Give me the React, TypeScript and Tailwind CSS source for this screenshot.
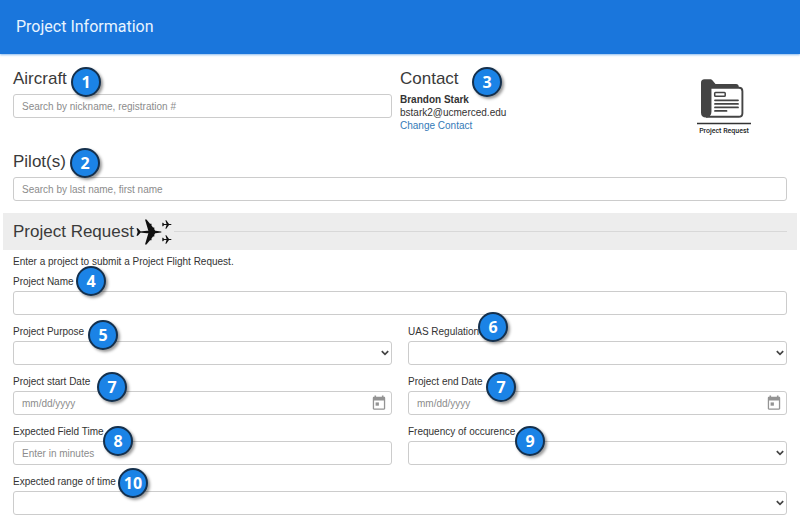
import type { ReactNode } from "react";

const field =
  "block h-6 w-full rounded-[3px] border border-[#ccc] bg-white px-2 text-[10px] leading-4 text-[#333] placeholder:text-[#8c8c8c] placeholder:opacity-100 outline-none focus:border-[#1a76dc]";

function Badge({ n, className }: { n: number; className: string }) {
  return (
    <span
      className={`absolute z-10 flex size-[30px] items-center justify-center rounded-full border-2 border-[#14304d] bg-[#1b83e6] font-['Open_Sans',sans-serif] text-base leading-none font-bold text-white shadow-[2px_2px_3px_rgba(0,0,0,0.4)] ${className}`}
    >
      {n}
    </span>
  );
}

function Heading({ children, badge }: { children: ReactNode; badge?: ReactNode }) {
  return (
    <div className="flex">
      <h2 className="relative text-[17px] leading-6 text-[#3a3a3a]">
        {children}
        {badge}
      </h2>
    </div>
  );
}

function Field({
  id,
  label,
  badge,
  children,
}: {
  id: string;
  label: string;
  badge: ReactNode;
  children: ReactNode;
}) {
  return (
    <div className="pt-[3px]">
      <div className="flex">
        <label htmlFor={id} className="relative block h-[17px] leading-4">
          {label}
          {badge}
        </label>
      </div>
      {children}
    </div>
  );
}

function Select({ id }: { id: string }) {
  return (
    <div className="relative">
      <select id={id} className={`${field} appearance-none`} defaultValue="">
        <option value="" />
      </select>
      <svg
        viewBox="0 0 8 6"
        className="pointer-events-none absolute top-[9px] right-[3px] h-1.5 w-2"
        fill="none"
        stroke="#444"
        strokeWidth="1.7"
        aria-hidden="true"
      >
        <path d="M0.8 1.2 L4 4.400 L7.2 1.2" />
      </svg>
    </div>
  );
}

function DateInput({ id }: { id: string }) {
  return (
    <div className="relative">
      <input id={id} type="text" placeholder="mm/dd/yyyy" className={field} />
      <svg viewBox="0 0 14 16" className="pointer-events-none absolute top-1 right-1.5 h-4 w-3.5" fill="#949494" aria-hidden="true">
        <path
          fillRule="evenodd"
          d="M2.5 0.5h1.6v1.3h5.8V0.5h1.6v1.3H12c.7 0 1.2.5 1.2 1.2v10.6c0 .7-.5 1.2-1.2 1.2H2c-.7 0-1.2-.5-1.2-1.2V3c0-.7.5-1.2 1.2-1.2h.5zM2.1 5.6v7.9h9.8V5.6z"
        />
        <path d="M3.6 7.4h3.3v3.3H3.6z" />
      </svg>
    </div>
  );
}

function Planes() {
  return (
    <svg viewBox="0 0 36 28" className="h-7 w-9" fill="#111" aria-hidden="true">
      <path d="M0.500 10.300h1.300l2.700 3v1.400l-2.700 3h-1.300l1.200-3.700z" />
      <path d="M3.500 13.400 L11 12.700 H19.500 L25 13.400 Q26.300 14 25 14.600 L19.500 15.300 H11 L3.500 14.600 Z" />
      <path d="M9 1.500 h1.500 L14 5.800 h1.500 v1.800 l1.500 1.900 h1.300 v1.800 L19.500 13.500 v1 L18.300 16.700 v1.800 H17 l-1.500 1.900 v1.800 H14 L10.500 26.500 H9 L12.700 14z" />
      {[6.500, 21.500].map((y) => (
        <g key={y} transform={`translate(26 ${y})`}>
          <path d="M0.300 -1.800h.8l1 1.300H9.300v1H2.100l-1 1.300H.3z" />
          <path d="M3.400 -4.200h.9L7 -.4v.8L4.300 4.200h-.9L4.700 0z" />
        </g>
      ))}
    </svg>
  );
}

function FolderIcon() {
  return (
    <svg viewBox="0 0 54 46" className="h-[46px] w-[54px]" aria-hidden="true">
      <path
        fill="#444"
        d="M4 4 C4 1.500 5.2 0.300 7.500 0.300 h5.500 c1.500 0 2.200.600 3 1.600 l2.500 3 H39 c1.800 0 2.800 1 2.800 3 V34 H8 c-2.500 0-4-1.500-4-4z"
      />
      <path fill="#fff" stroke="#444" strokeWidth="1.900" d="M13.500 8.800 h28.500 q3.400 0 3.400 3.400 v22 q0 3.600-3.800 3.600 H9 q4.500-1 4.500-5z" />
      <path fill="#444" d="M4 12 h9.500 v21.300 q0 5.300-4.500 5.300 q-5 0-5-5z" />
      <rect x="17.700" y="13.500" width="10.500" height="3.800" rx="0.800" fill="#fff" stroke="#444" strokeWidth="1.500" />
      <path stroke="#444" strokeWidth="1.800" strokeLinecap="round" d="M18 21.300h23M18 24.900h23M18 28.400h23M18 31.900h11.500" />
      <path stroke="#333" strokeWidth="1.700" d="M0 44.500h54" />
    </svg>
  );
}

export default function App() {
  return (
    <div className="min-h-screen bg-white font-['Liberation_Sans',Arial,sans-serif] text-[10px] leading-[13px] text-[#333]">
      <header className="flex h-[54px] items-center bg-[#1a76dc] px-4 shadow-[0_1px_2px_rgba(26,118,220,0.5)]">
        <h1 className="font-[Roboto,sans-serif] text-base leading-6 text-[#e8f4ff]">Project Information</h1>
      </header>

      <main className="px-[3px] pb-4">
        <section className="grid grid-cols-2 px-2.5 pt-[13px]">
          <div className="pr-2">
            <Heading badge={<Badge n={1} className="top-0 left-[58px]" />}>
              <label htmlFor="aircraft">Aircraft</label>
            </Heading>
            <input id="aircraft" type="text" placeholder="Search by nickname, registration #" className={`${field} mt-[3px]`} />
          </div>
          <div className="flex justify-between">
            <div>
              <Heading badge={<Badge n={3} className="top-0 left-[72px]" />}>Contact</Heading>
              <p className="mt-0.5 font-bold">Brandon Stark</p>
              <p>bstark2@ucmerced.edu</p>
              <a href="#contact" className="block text-[#337ab7]">
                Change Contact
              </a>
            </div>
            <figure className="mt-3 mr-9 flex flex-col items-center">
              <FolderIcon />
              <figcaption className="font-[Roboto,sans-serif] text-[7px] leading-3 font-medium whitespace-nowrap text-[#222]">
                Project Request
              </figcaption>
            </figure>
          </div>
        </section>

        <section className="px-2.5 pt-[13px]">
          <Heading badge={<Badge n={2} className="-top-0.5 left-[57px]" />}>
            <label htmlFor="pilots">Pilot(s)</label>
          </Heading>
          <input id="pilots" type="text" placeholder="Search by last name, first name" className={`${field} mt-[3px]`} />
        </section>

        <div className="mt-3 flex h-[37px] items-center bg-[#ededed] px-2.5">
          <Heading>Project Request</Heading>
          <span className="ml-0.5">
            <Planes />
          </span>
          <hr className="ml-0.5 flex-1 border-[#d8d8d8]" />
        </div>

        <section className="px-2.5 pt-[5px]">
          <p>Enter a project to submit a Project Flight Request.</p>
          <div className="mt-[3px] grid grid-cols-2 gap-x-4 gap-y-1.5">
            <div className="col-span-2">
              <Field id="name" label="Project Name" badge={<Badge n={4} className="-top-2 left-[63px]" />}>
                <input id="name" type="text" className={field} />
              </Field>
            </div>
            <Field id="purpose" label="Project Purpose" badge={<Badge n={5} className="-top-1 left-[75px]" />}>
              <Select id="purpose" />
            </Field>
            <Field id="regulation" label="UAS Regulation" badge={<Badge n={6} className="-top-3 left-[70px]" />}>
              <Select id="regulation" />
            </Field>
            <Field id="start" label="Project start Date" badge={<Badge n={7} className="-top-0.5 left-[84px]" />}>
              <DateInput id="start" />
            </Field>
            <Field id="end" label="Project end Date" badge={<Badge n={7} className="-top-0.5 left-[78px]" />}>
              <DateInput id="end" />
            </Field>
            <Field id="fieldtime" label="Expected Field Time" badge={<Badge n={8} className="top-0.5 left-[90px]" />}>
              <input id="fieldtime" type="text" placeholder="Enter in minutes" className={field} />
            </Field>
            <Field id="frequency" label="Frequency of occurence" badge={<Badge n={9} className="top-0.5 left-[107px]" />}>
              <Select id="frequency" />
            </Field>
            <div className="col-span-2">
              <Field id="range" label="Expected range of time" badge={<Badge n={10} className="-top-1.5 left-[105px]" />}>
                <Select id="range" />
              </Field>
            </div>
          </div>
        </section>
      </main>
    </div>
  );
}
